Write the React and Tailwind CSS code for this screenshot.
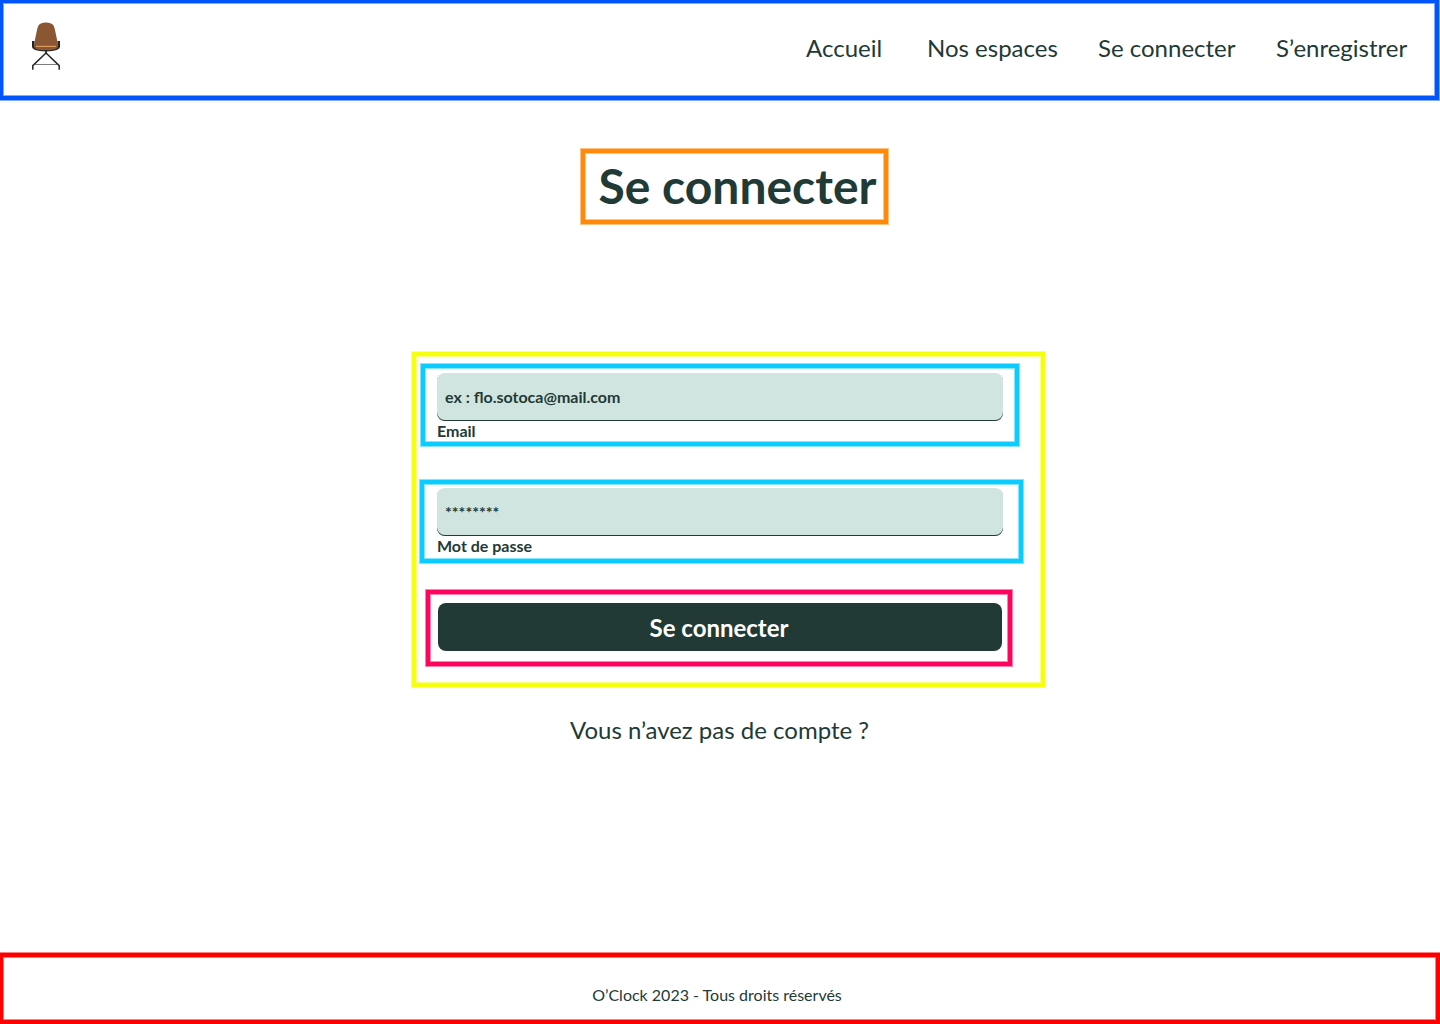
function Chair() {
  return (
    <svg viewBox="0 0 32 50" className="ml-[27px] mt-[18px] h-[50px] w-8" fill="none">
      <path d="M2 20H4.6V25H27.4V20H30V25.5C30 28.4 25.5 30.4 16 30.4C6.5 30.4 2 28.4 2 25.5Z" fill="#252525" />
      <path d="M16 1.4C19.5 1.4 21.9 2.2 23.2 4C24.4 5.8 24.8 8 25.3 10.5L26.9 18L28 25.5C28 27.8 24 29.2 16 29.2C8 29.2 4 27.8 4 25.5L5.1 18L6.7 10.5C7.2 8 7.6 5.8 8.8 4C10.1 2.2 12.5 1.4 16 1.4Z" fill="#8b5733" />
      <path d="M6 25.4H26" stroke="#dc9a63" strokeWidth="1.2" />
      <path d="M16 29.5V33" stroke="#252525" strokeWidth="1.8" />
      <path d="M16 32L2.8 44.6V48.8M16 32L29.2 44.6V48.8" stroke="#252525" strokeWidth="1.5" />
      <path d="M4 43.5H28" stroke="#444444" strokeWidth="0.7" />
    </svg>
  );
}

const links = [
  { label: "Accueil", box: "w-[121px]" },
  { label: "Nos espaces", box: "w-[171px]" },
  { label: "Se connecter", box: "w-[178px]" },
  { label: "S’enregistrer", box: "w-[159px]" },
];

function Field({ label, value }) {
  return (
    <label className="block w-[566px] text-base leading-5 font-bold">
      <span className="flex h-12 items-center rounded-lg bg-[#d1e5e0] px-2 shadow-[inset_0_-1px_0_#223a35]">{value}</span>
      <span className="block">{label}</span>
    </label>
  );
}

export default function App() {
  return (
    <div className="flex h-[1024px] w-[1440px] flex-col overflow-hidden bg-white font-['Lato',sans-serif] text-[#223a35]">
      <header className="flex h-[100px] w-[1439px] shrink-0 items-start justify-between border-4 border-t-3 border-l-3 border-[#0055ff] shadow-[0_0_0_1px_#0055ff80,inset_0_0_0_1px_#0055ff80]">
        <Chair />
        <nav className="mt-[30px] flex text-2xl leading-[29px] whitespace-nowrap">
          {links.map((link) => (
            <a key={link.label} className={link.box}>{link.label}</a>
          ))}
        </nav>
      </header>

      <main className="flex flex-col items-start">
        <h1 className="mt-[49px] ml-[581px] flex h-[75px] w-[307px] items-center border-4 border-[#ff890a] pb-0.5 pl-[13.5px] text-5xl font-bold whitespace-nowrap shadow-[0_0_0_1px_#ff890a80,inset_0_0_0_1px_#ff890a80]">
          Se connecter
        </h1>

        <form className="mt-32 ml-[412px] flex h-[335px] w-[633px] flex-col items-start border-4 border-[#f6ff0c] shadow-[0_0_0_1px_#f6ff0c80,inset_0_0_0_1px_#f6ff0c80]">
          <div className="mt-2 ml-[5px] h-[82px] w-[598px] border-4 border-[#0accff] pt-[5px] pl-3 shadow-[0_0_0_1px_#0accff80,inset_0_0_0_1px_#0accff80]">
            <Field label="Email" value="ex : flo.sotoca@mail.com" />
          </div>
          <div className="mt-[34px] ml-1 h-[83px] w-[603px] border-4 border-[#0accff] pt-1 pl-[13px] shadow-[0_0_0_1px_#0accff80,inset_0_0_0_1px_#0accff80]">
            <Field label="Mot de passe" value="********" />
          </div>
          <div className="mt-[27px] ml-2.5 h-[76px] w-[586px] border-4 border-[#ff045d] pt-[9px] pl-2 shadow-[0_0_0_1px_#ff045d80,inset_0_0_0_1px_#ff045d80]">
            <button type="button" className="flex h-12 w-[564px] items-center justify-center rounded-lg bg-[#223a35] pt-px pr-0.5 text-2xl leading-[29px] font-bold text-white">
              Se connecter
            </button>
          </div>
        </form>

        <p className="mt-7 w-[1439px] text-center text-2xl leading-[29px]">Vous n’avez pas de compte ?</p>
      </main>

      <footer className="mt-auto h-[71px] w-full border-4 border-l-3 border-[#ff0000] pt-7 text-center text-base leading-5 shadow-[0_0_0_1px_#ff000080,inset_0_0_0_1px_#ff000080]">
        <p className="mr-[5px]">O’Clock 2023 - Tous droits réservés</p>
      </footer>
    </div>
  );
}
